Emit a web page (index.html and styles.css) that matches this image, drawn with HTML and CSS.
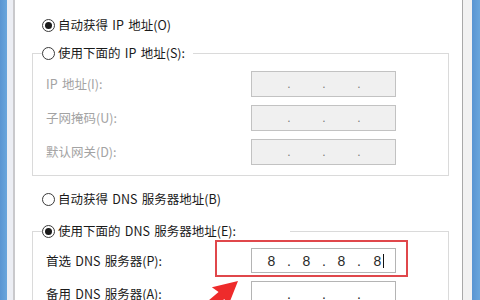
FILE: index.html
```html
<!DOCTYPE html>
<html lang="zh-CN">
<head>
<meta charset="utf-8">
<title>IPv4 属性</title>
<link rel="stylesheet" href="styles.css">
</head>
<body>
<div class="window">
  <div class="frame-blue"></div>
  <div class="frame-inner-left"></div>
  <div class="content">
    <div class="radio-row top-row">
      <span class="radio checked"></span><span>自动获得 IP 地址(O)</span>
    </div>
    <fieldset class="group group-ip">
      <legend class="legend legend-ip">
        <span class="radio-row"><span class="radio"></span><span>使用下面的 IP 地址(S):</span></span>
      </legend>
      <div class="rows rows-ip">
        <span class="label disabled">IP 地址(I):</span>
        <div class="ipbox disabled-box"><span class="oct"></span><span class="dot">.</span><span class="oct"></span><span class="dot">.</span><span class="oct"></span><span class="dot">.</span><span class="oct"></span></div>
        <span class="label disabled">子网掩码(U):</span>
        <div class="ipbox disabled-box"><span class="oct"></span><span class="dot">.</span><span class="oct"></span><span class="dot">.</span><span class="oct"></span><span class="dot">.</span><span class="oct"></span></div>
        <span class="label disabled">默认网关(D):</span>
        <div class="ipbox disabled-box"><span class="oct"></span><span class="dot">.</span><span class="oct"></span><span class="dot">.</span><span class="oct"></span><span class="dot">.</span><span class="oct"></span></div>
      </div>
    </fieldset>
    <div class="radio-row dns-auto">
      <span class="radio"></span><span>自动获得 DNS 服务器地址(B)</span>
    </div>
    <fieldset class="group group-dns">
      <legend class="legend legend-dns">
        <span class="radio-row"><span class="radio checked"></span><span>使用下面的 DNS 服务器地址(E):</span></span>
      </legend>
      <div class="rows rows-dns">
        <span class="label">首选 DNS 服务器(P):</span>
        <div class="ipbox active">
          <span class="oct">8</span><span class="dot">.</span><span class="oct">8</span><span class="dot">.</span><span class="oct">8</span><span class="dot">.</span><span class="oct last">8<span class="caret"></span></span>
          <span class="highlight"></span>
        </div>
        <span class="label">备用 DNS 服务器(A):</span>
        <div class="ipbox"><span class="oct"></span><span class="dot">.</span><span class="oct"></span><span class="dot">.</span><span class="oct"></span><span class="dot">.</span><span class="oct"></span></div>
      </div>
    </fieldset>
  </div>
  <div class="frame-inner-right"></div>
  <div class="frame-blue right"></div>
  <svg class="arrow" width="480" height="300" viewBox="0 0 480 300">
    <g transform="translate(238,281) rotate(-40)">
      <polygon points="0,0 -24,-12 -22,-4 -70,-4 -70,5 -22,5 -24,13" fill="#ee2b2b"/>
    </g>
  </svg>
</div>
</body>
</html>
```

FILE: styles.css
```css
html, body {
  margin: 0;
  padding: 0;
  background: #ffffff;
}

.window {
  position: relative;
  width: 480px;
  height: 300px;
  display: flex;
  overflow: hidden;
  font-family: "Noto Sans CJK SC", "Noto Sans", sans-serif;
  font-size: 12.5px;
  word-spacing: 1.5px;
  color: #1a1a1a;
}

.frame-blue {
  width: 7px;
  flex: none;
  background: linear-gradient(90deg, #5a95d2, #6aa6dc);
}

.frame-blue.right {
  width: 8px;
}

.frame-inner-left {
  width: 6px;
  flex: none;
  background: #eceef4;
  border-right: 2px solid #c9c9cc;
}

.frame-inner-right {
  width: 9px;
  flex: none;
  background: #f2f2f2;
  border-left: 1px solid #a9a9a9;
}

.content {
  width: 447px;
  flex: none;
  background: #ffffff;
  padding: 15px 0 0 17px;
  box-sizing: border-box;
}

.radio-row {
  display: flex;
  align-items: center;
  gap: 3px;
  height: 20px;
  line-height: 20px;
  white-space: nowrap;
}

.top-row,
.dns-auto {
  padding-left: 10px;
}

.dns-auto {
  margin-top: 13px;
}

.radio {
  width: 11px;
  height: 11px;
  flex: none;
  border: 1px solid #3a3a3a;
  border-radius: 50%;
  background: #ffffff;
  display: flex;
  align-items: center;
  justify-content: center;
}

.radio.checked::after {
  content: "";
  width: 7px;
  height: 7px;
  border-radius: 50%;
  background: #1a1a1a;
}

.group {
  margin: 8px 13px 0 0;
  padding: 0;
  border: 1px solid #dadada;
  min-inline-size: 0;
}

.group-dns {
  margin-top: 12px;
}

.legend {
  margin-left: 9px;
  padding: 0;
  height: 20px;
}

.legend-ip {
  padding-right: 8px;
}

.legend-dns {
  width: 248px;
}

.rows {
  display: grid;
  grid-template-columns: 205px 145px;
  align-items: center;
  padding: 8px 0 10px 13px;
}

.rows-ip {
  grid-auto-rows: 26px;
  row-gap: 8px;
}

.rows-dns {
  grid-auto-rows: 25px;
  row-gap: 8px;
  padding-top: 7px;
}

.label {
  line-height: 20px;
  white-space: nowrap;
}

.label.disabled {
  color: #a3a3a3;
}

.ipbox {
  position: relative;
  box-sizing: border-box;
  height: 100%;
  display: flex;
  align-items: center;
  padding-left: 2px;
  border: 1px solid #b4b4b4;
  background: #ffffff;
  font-family: "Liberation Sans", Arial, sans-serif;
  font-size: 14px;
  word-spacing: 0;
  color: #2a2a2a;
}

.ipbox.disabled-box {
  background: #f0f0f0;
  border-color: #c2c2c2;
  color: #7a7a7a;
}

.oct {
  position: relative;
  width: 35px;
  flex: none;
  text-align: center;
}

.dot {
  width: 0;
  flex: none;
  display: flex;
  justify-content: center;
}

.disabled-box .dot {
  font-size: 12px;
}

.oct.last {
  text-indent: 2px;
}

.caret {
  position: absolute;
  left: calc(50% + 6px);
  top: 1px;
  width: 1px;
  height: 14px;
  background: #111111;
}

.highlight {
  position: absolute;
  left: -37px;
  top: -9px;
  width: 193px;
  height: 37px;
  box-sizing: border-box;
  border: 2px solid #e0474b;
  pointer-events: none;
}

.arrow {
  position: absolute;
  left: 0;
  top: 0;
  pointer-events: none;
}
```
